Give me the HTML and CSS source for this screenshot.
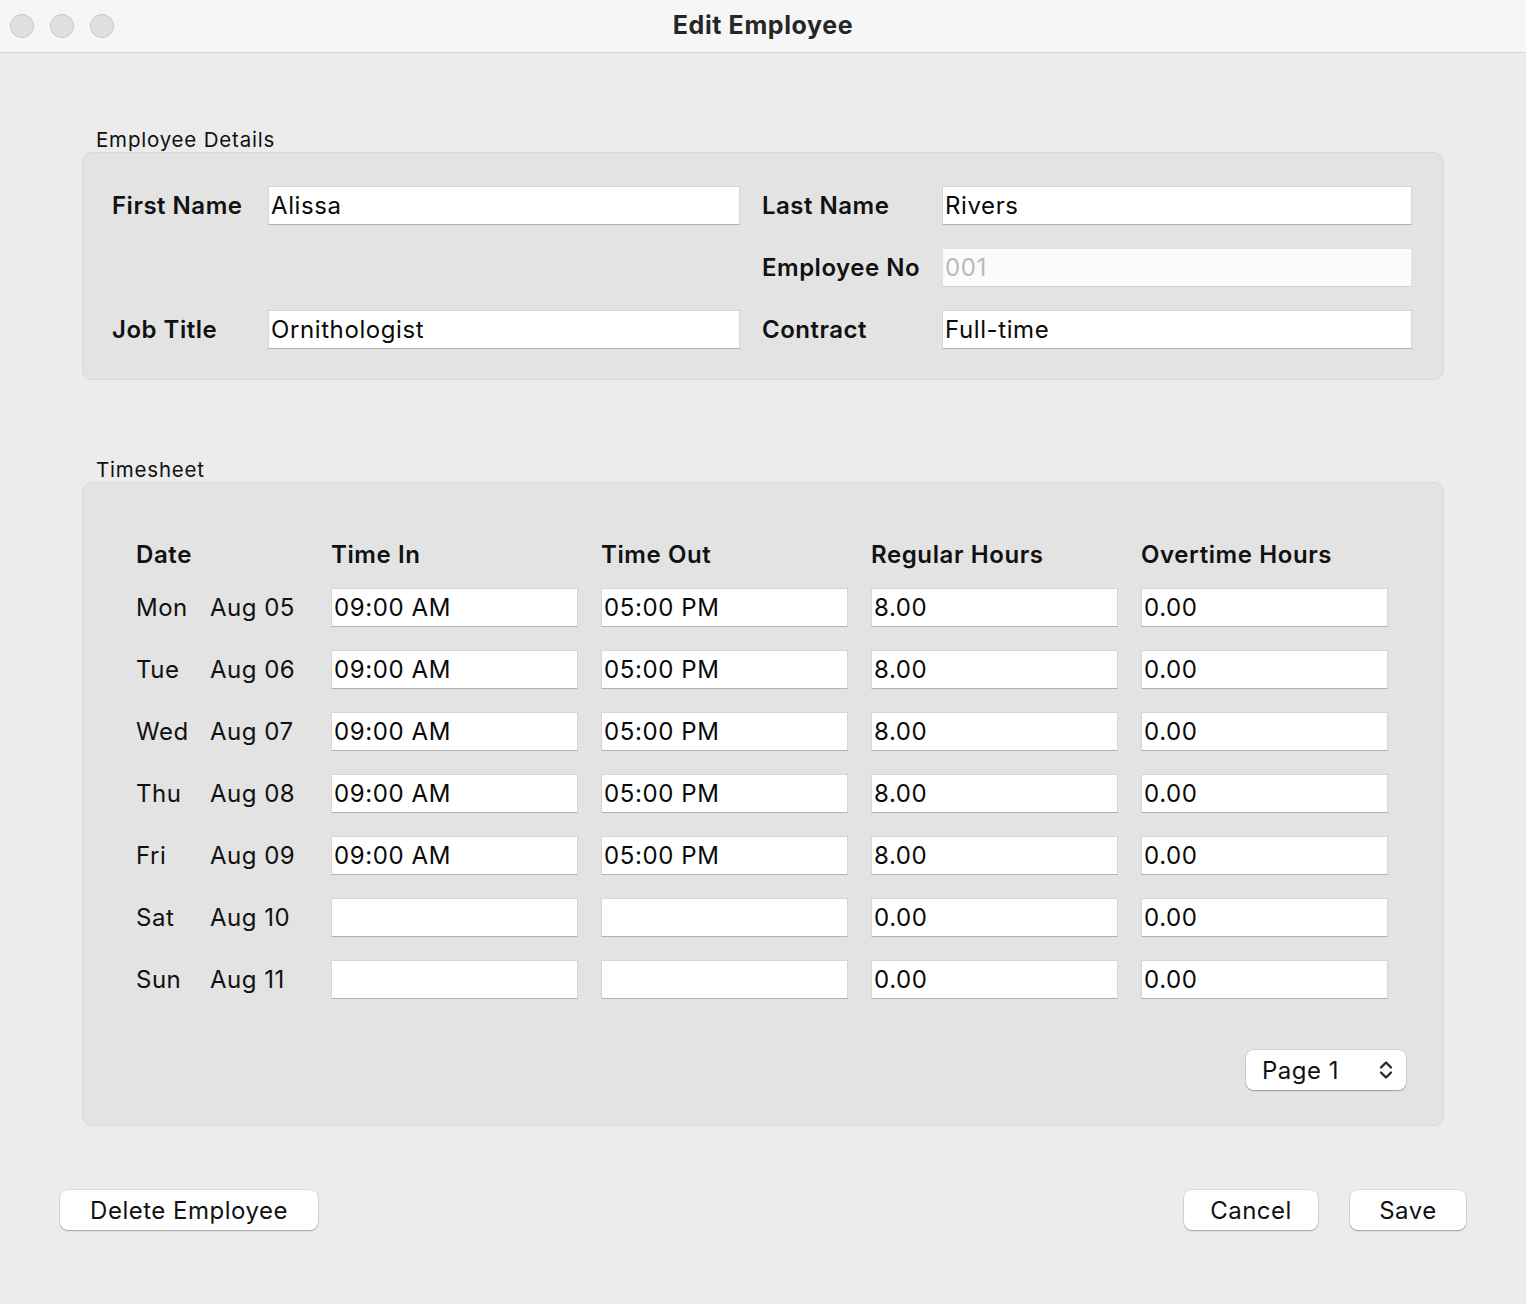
FILE: index.html
```html
<!DOCTYPE html>
<html>
<head>
<meta charset="utf-8">
<title>Edit Employee</title>
<link rel="stylesheet" href="styles.css">
</head>
<body>
<div class="window">
  <header class="titlebar">
    <div class="lights">
      <span class="light"></span><span class="light"></span><span class="light"></span>
    </div>
    <div class="title">Edit Employee</div>
  </header>

  <main class="content">
    <div class="legend legend-first">Employee Details</div>
    <section class="group details">
      <label class="lbl">First Name</label>
      <div class="field">Alissa</div>
      <label class="lbl lbl-right">Last Name</label>
      <div class="field">Rivers</div>

      <div class="empty"></div>
      <div class="empty"></div>
      <label class="lbl lbl-right">Employee No</label>
      <div class="field disabled">001</div>

      <label class="lbl">Job Title</label>
      <div class="field">Ornithologist</div>
      <label class="lbl lbl-right">Contract</label>
      <div class="field">Full-time</div>
    </section>

    <div class="legend legend-second">Timesheet</div>
    <section class="group timesheet">
      <div class="sheet">
        <div class="hdr">Date</div>
        <div class="hdr">Time In</div>
        <div class="hdr">Time Out</div>
        <div class="hdr">Regular Hours</div>
        <div class="hdr">Overtime Hours</div>

        <div class="date"><span class="day">Mon</span><span>Aug 05</span></div>
        <div class="field">09:00 AM</div><div class="field">05:00 PM</div><div class="field">8.00</div><div class="field">0.00</div>

        <div class="date"><span class="day">Tue</span><span>Aug 06</span></div>
        <div class="field">09:00 AM</div><div class="field">05:00 PM</div><div class="field">8.00</div><div class="field">0.00</div>

        <div class="date"><span class="day">Wed</span><span>Aug 07</span></div>
        <div class="field">09:00 AM</div><div class="field">05:00 PM</div><div class="field">8.00</div><div class="field">0.00</div>

        <div class="date"><span class="day">Thu</span><span>Aug 08</span></div>
        <div class="field">09:00 AM</div><div class="field">05:00 PM</div><div class="field">8.00</div><div class="field">0.00</div>

        <div class="date"><span class="day">Fri</span><span>Aug 09</span></div>
        <div class="field">09:00 AM</div><div class="field">05:00 PM</div><div class="field">8.00</div><div class="field">0.00</div>

        <div class="date"><span class="day">Sat</span><span>Aug 10</span></div>
        <div class="field"></div><div class="field"></div><div class="field">0.00</div><div class="field">0.00</div>

        <div class="date"><span class="day">Sun</span><span>Aug 11</span></div>
        <div class="field"></div><div class="field"></div><div class="field">0.00</div><div class="field">0.00</div>
      </div>
      <div class="pager">
        <div class="popup">
          <span>Page 1</span>
          <svg class="chev" width="16" height="24" viewBox="0 0 16 24">
            <path d="M3 9.5 L8 4.5 L13 9.5" fill="none" stroke="#2a2a2a" stroke-width="2.4" stroke-linecap="round" stroke-linejoin="round"/>
            <path d="M3 14.5 L8 19.5 L13 14.5" fill="none" stroke="#2a2a2a" stroke-width="2.4" stroke-linecap="round" stroke-linejoin="round"/>
          </svg>
        </div>
      </div>
    </section>

    <footer class="actions">
      <button class="btn btn-delete">Delete Employee</button>
      <div class="spacer"></div>
      <button class="btn btn-cancel">Cancel</button>
      <button class="btn btn-save">Save</button>
    </footer>
  </main>
</div>
</body>
</html>
```

FILE: styles.css
```css
html, body {
  margin: 0;
  padding: 0;
}
body {
  width: 1526px;
  height: 1304px;
  background: #ececec;
  font-family: Inter, "Noto Sans", "Liberation Sans", sans-serif;
  color: #111;
  overflow: hidden;
}
.window {
  width: 1526px;
  height: 1304px;
  display: flex;
  flex-direction: column;
}
.titlebar {
  height: 52px;
  background: #f6f6f6;
  border-bottom: 1px solid #d4d4d4;
  display: flex;
  align-items: center;
  position: relative;
  flex-shrink: 0;
}
.lights {
  display: flex;
  gap: 16px;
  padding-left: 10px;
}
.light {
  width: 22px;
  height: 22px;
  border-radius: 50%;
  background: #dfdfdf;
  border: 1px solid #c6c6c6;
}
.title {
  position: absolute;
  left: 0;
  right: 0;
  text-align: center;
  font-size: 25px;
  font-weight: 700;
  color: #262626;
  letter-spacing: 0.6px;
  padding-left: 0;
  pointer-events: none;
  margin-top: -2px;
}
.content {
  display: flex;
  flex-direction: column;
  padding: 0 60px 0 60px;
}
.legend {
  font-size: 20.5px;
  line-height: 24px;
  color: #111;
  margin-left: 36px;
  height: 24px;
  letter-spacing: 0.8px;
}
.legend-first {
  margin-top: 75px;
}
.legend-second {
  margin-top: 78px;
}
.group {
  margin: 0 22px;
  background: #e3e3e3;
  border: 1px solid #d9d9d9;
  border-radius: 10px;
}
.details {
  display: grid;
  grid-template-columns: 156px 472px 202px 470px;
  row-gap: 23px;
  padding: 33px 31px 30px 29px;
  align-items: center;
}
.lbl {
  font-size: 24px;
  font-weight: 600;
  color: #111;
  letter-spacing: 0.5px;
}
.lbl-right {
  padding-left: 22px;
}
.field {
  height: 39px;
  box-sizing: border-box;
  background: #fff;
  border: 1px solid #d6d6d6;
  border-bottom-color: #b2b2b2;
  font-size: 24px;
  line-height: 37px;
  padding-left: 2px;
  color: #0a0a0a;
  white-space: nowrap;
  overflow: hidden;
  letter-spacing: 0.6px;
}
.field.disabled {
  border-color: #e3e3e3;
  border-bottom-color: #d0d0d0;
  background: #fbfbfb;
  color: #b9b9b9;
}
.timesheet {
  padding: 54px 37px 35px 53px;
  display: flex;
  flex-direction: column;
}
.sheet {
  display: grid;
  grid-template-columns: 172px 247px 247px 247px 247px;
  column-gap: 23px;
  grid-template-rows: 28px;
  grid-auto-rows: 39px;
  row-gap: 23px;
  align-items: center;
}
.hdr {
  font-size: 24px;
  font-weight: 600;
  line-height: 28px;
  margin-top: 1px;
  margin-bottom: -4px;
  align-self: end;
  letter-spacing: 0.6px;
}
.date {
  display: flex;
  font-size: 24px;
  color: #111;
  letter-spacing: 0.5px;
}
.day {
  width: 74px;
}
.pager {
  display: flex;
  justify-content: flex-end;
  margin-top: 51px;
}
.popup {
  width: 160px;
  height: 40px;
  box-sizing: border-box;
  background: #fff;
  border-radius: 8px;
  box-shadow: 0 0 0 0.5px rgba(0,0,0,0.12), 0 1px 1.5px rgba(0,0,0,0.28);
  display: flex;
  align-items: center;
  justify-content: space-between;
  padding: 0 12px 0 16px;
  font-size: 24px;
  color: #111;
  letter-spacing: 0.5px;
}
.chev {
  display: block;
}
.actions {
  display: flex;
  align-items: center;
  margin-top: 64px;
  gap: 32px;
}
.spacer {
  flex: 1;
}
.btn {
  height: 40px;
  background: #fff;
  border: none;
  border-radius: 8px;
  box-shadow: 0 0 0 0.5px rgba(0,0,0,0.12), 0 1px 1.5px rgba(0,0,0,0.28);
  font-family: Inter, "Noto Sans", "Liberation Sans", sans-serif;
  font-size: 24px;
  color: #111;
  padding: 0;
  letter-spacing: 0.5px;
}
.btn-delete { width: 258px; }
.btn-cancel { width: 134px; }
.btn-save { width: 116px; }
```
